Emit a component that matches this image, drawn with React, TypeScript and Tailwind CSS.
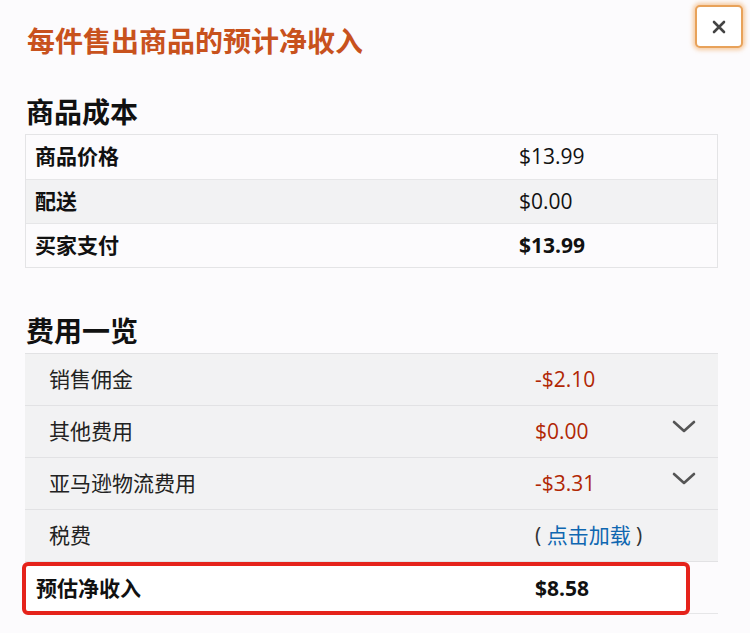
const cjk = "font-['Open_Sans','Noto_Sans_CJK_SC',sans-serif]";

const Chevron = () => (
  <svg width="24" height="14" viewBox="0 0 24 14" fill="none">
    <path d="M2 2 L12 11 L22 2" stroke="#555" strokeWidth="2.6" strokeLinecap="round" strokeLinejoin="round" />
  </svg>
);

const costRows = [
  { label: "商品价格", value: "$13.99", bg: "bg-[#fcfbfd]", bold: false },
  { label: "配送", value: "$0.00", bg: "bg-[#f2f2f3]", bold: false },
  { label: "买家支付", value: "$13.99", bg: "bg-[#fcfbfd]", bold: true },
];

const feeRows = [
  { label: "销售佣金", value: "-$2.10", chevron: false },
  { label: "其他费用", value: "$0.00", chevron: true },
  { label: "亚马逊物流费用", value: "-$3.31", chevron: true },
];

export default function App() {
  return (
    <div className={`w-[750px] h-[633px] bg-[#fcfbfd] pl-[25px] overflow-hidden ${cjk}`}>
      <div className="flex items-start justify-between">
        <h1 className="mt-[25px] pl-[2px] text-[28px] leading-[32px] font-bold text-[#c8521d]">
          每件售出商品的预计净收入
        </h1>
        <button className="mt-[5px] mr-[7px] w-[48px] h-[43px] flex items-center justify-center rounded-[5px] bg-white border-2 border-[#e8a25a] shadow-[0_0_4px_2px_rgba(240,160,80,0.55)]">
          <svg width="16" height="16" viewBox="0 0 16 16">
            <path d="M3 3 L13 13 M13 3 L3 13" stroke="#444" strokeWidth="2.6" strokeLinecap="round" />
          </svg>
        </button>
      </div>

      <h2 className="mt-[39px] pl-[1px] text-[28px] leading-[32px] font-bold text-[#111]">商品成本</h2>
      <div className="mt-[6px] w-[693px] border border-[#e4e4e6]">
        {costRows.map((r, i) => (
          <div
            key={r.label}
            className={`flex items-center h-[44px] ${r.bg} ${i > 0 ? "border-t border-[#e6e6e8]" : ""}`}
          >
            <div className="w-[493px] pl-[9px] text-[21px] font-semibold text-[#111]">{r.label}</div>
            <div className={`text-[21px] text-[#111] ${r.bold ? "font-bold" : "font-normal"}`}>{r.value}</div>
          </div>
        ))}
      </div>

      <h2 className="mt-[47px] pl-[1px] text-[28px] leading-[32px] font-bold text-[#111]">费用一览</h2>
      <div className="mt-[6px] w-[693px] border-t border-[#e2e2e4]">
        {feeRows.map((r) => (
          <div key={r.label} className="flex items-center h-[52px] bg-[#f2f2f3] border-b border-[#e2e2e4]">
            <div className="w-[510px] pl-[24px] text-[21px] text-[#222]">{r.label}</div>
            <div className="flex-1 text-[21px] text-[#b12704]">{r.value}</div>
            {r.chevron && (
              <div className="mr-[22px] -mt-[10px]">
                <Chevron />
              </div>
            )}
          </div>
        ))}
        <div className="flex items-center h-[52px] bg-[#f2f2f3] border-b border-[#e2e2e4]">
          <div className="w-[510px] pl-[24px] text-[21px] text-[#222]">税费</div>
          <div className="text-[21px] text-[#333] whitespace-pre">
            {"( "}<span className="text-[#0f67b1]">点击加载</span>{" )"}
          </div>
        </div>
        <div className="flex h-[52px] bg-[#fcfbfd] border-b border-[#e6e6e8]">
          <div className="-ml-[3px] w-[668px] h-[53px] flex items-center rounded-[6px] border-4 border-[#e5231b] bg-white">
            <div className="w-[509px] pl-[10px] text-[21px] font-semibold text-[#111]">预估净收入</div>
            <div className="text-[21px] font-bold text-[#111]">$8.58</div>
          </div>
        </div>
      </div>
    </div>
  );
}
